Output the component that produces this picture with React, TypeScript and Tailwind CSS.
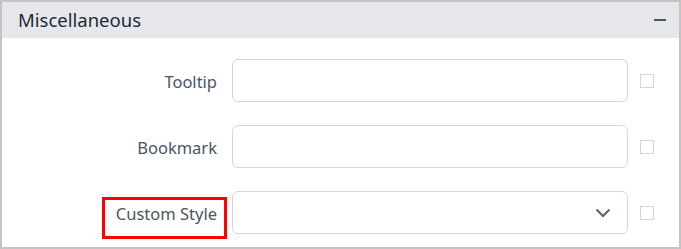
const Row = ({ label, select, marked }: { label: string; select?: boolean; marked?: boolean }) => {
  return (
    <div className="flex items-center h-[43px]">
      <div className="w-[230px] flex justify-end pr-[15px] pt-[3px]">
        <span className="relative text-[16.5px] text-[#4b5563]">
          {label}
          {marked && (
            <span className="absolute left-[-14px] right-[-10px] top-[-5px] bottom-[-13px] border-[3px] border-[#ff0000]"></span>
          )}
        </span>
      </div>
      <div className="w-[396px] h-[43px] border border-[#d4d6db] rounded-[6px] bg-white flex items-center justify-end pr-[16px]">
        {select && (
          <svg width="16" height="10" viewBox="0 0 16 10" fill="none">
            <path d="M1.5 1.5 L8 8 L14.5 1.5" stroke="#5b6270" strokeWidth="2" />
          </svg>
        )}
      </div>
      <div className="ml-[12px] w-[14px] h-[14px] border border-[#d4d6db]"></div>
    </div>
  );
};

export default function App() {
  return (
    <div className="w-[681px] h-[249px] border-2 border-[#c3c3c3] bg-white" style={{ fontFamily: '"Noto Sans", "Open Sans", sans-serif' }}>
      <div className="h-[36px] bg-[#e5e7eb] flex items-center justify-between pl-[16px] pr-[13px]">
        <span className="text-[18.5px] text-[#1f2937]">Miscellaneous</span>
        <span className="w-[12px] h-[2px] bg-[#4b5563]"></span>
      </div>
      <div className="flex flex-col gap-[23px] pt-[21px]">
        <Row label="Tooltip" />
        <Row label="Bookmark" />
        <Row label="Custom Style" select marked />
      </div>
    </div>
  );
}
